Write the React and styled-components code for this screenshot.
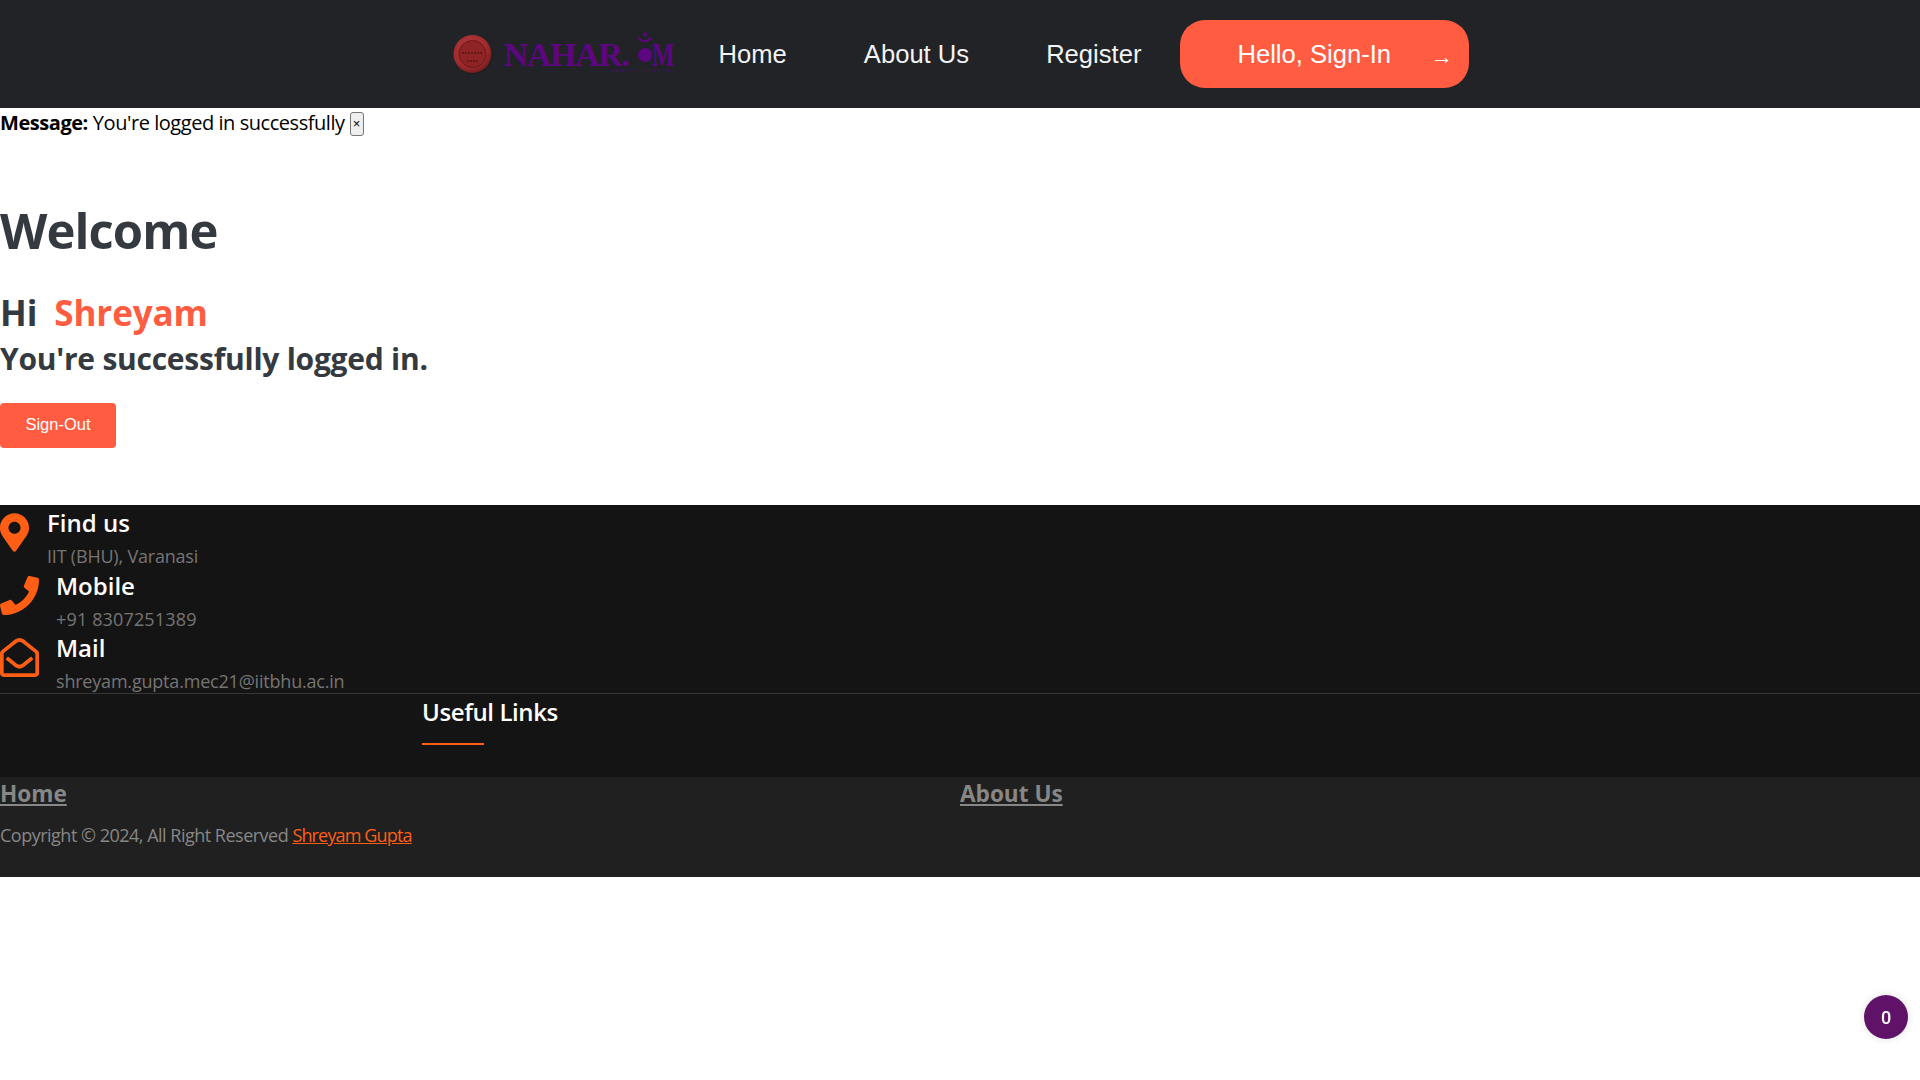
import React from 'react';
import styled, { createGlobalStyle } from 'styled-components';
import { FaMapMarkerAlt, FaPhone, FaRegEnvelopeOpen } from 'react-icons/fa';

const GlobalStyle = createGlobalStyle`
  * {
    box-sizing: border-box;
  }
  body {
    margin: 0;
    background: #fff;
    font-family: "Open Sans", "Noto Sans", sans-serif;
    color: #000;
  }
`;

const Navbar = styled.nav`
  height: 108px;
  background-color: #212326;
  display: flex;
  justify-content: center;
  align-items: center;
  font-family: "Liberation Sans", Arial, sans-serif;
`;

const Logo = styled.div`
  width: 223px;
  margin-right: 45px;
  padding-left: 2px;
  display: flex;
  align-items: center;
  justify-content: space-between;
`;

const SealIcon = styled.svg`
  flex: none;
`;

const Wordmark = styled.div`
  padding-top: 6px;
  display: flex;
  flex-direction: column;
  align-items: flex-end;
  color: #5c0680;
`;

const WordmarkRow = styled.div`
  display: flex;
  align-items: center;
  font-family: "Liberation Serif", serif;
  font-weight: 700;
  font-size: 34px;
  line-height: 26px;
  letter-spacing: -1.4px;
  white-space: nowrap;
`;

const OmMark = styled.span`
  position: relative;
  flex: none;
  width: 14px;
  height: 14px;
  margin-left: 9px;
  border-radius: 50%;
  background: #5c0680;
`;

const OmCrescent = styled.svg`
  position: absolute;
  left: -3px;
  top: -16px;
`;

const OmLetter = styled.span`
  display: inline-block;
  width: 22px;
  transform: scaleX(0.7);
  transform-origin: left center;
`;

const Tagline = styled.span`
  font-family: "Liberation Sans", sans-serif;
  font-size: 4px;
  line-height: 5px;
  letter-spacing: 2.6px;
  white-space: nowrap;
`;

const NavLink = styled.a`
  color: #f1f3f5;
  font-size: 25.6px;
  text-decoration: none;
  margin-right: ${(p) => p.$gap}px;
`;

const SignIn = styled.button`
  width: 289px;
  height: 68px;
  border: none;
  border-radius: 25px;
  background-color: #ff5c41;
  color: #fff;
  font-family: inherit;
  font-size: 25.6px;
  display: flex;
  align-items: center;
  padding: 0 0 0 57px;
`;

const Arrow = styled.span`
  font-size: 22px;
  margin-left: 40px;
  margin-top: 6px;
`;

const Alert = styled.div`
  height: 30px;
  margin-bottom: 63px;
  display: flex;
  align-items: center;
  font-size: 20px;
  line-height: 30px;
  letter-spacing: -0.45px;
`;

const AlertLabel = styled.strong`
  margin-right: 5px;
  font-weight: 700;
`;

const CloseButton = styled.button`
  width: 14px;
  height: 24px;
  margin: 2px 0 0 5px;
  padding: 0;
  border: 1px solid #767676;
  border-radius: 3px;
  background: #efefef;
  font-size: 13px;
  line-height: 20px;
  color: #000;
  font-family: "Liberation Sans", sans-serif;
`;

const Content = styled.main`
  color: #343a40;
  height: 304px;
`;

const Title = styled.h1`
  margin: 0 0 32px;
  font-size: 49px;
  line-height: 58px;
  letter-spacing: -0.9px;
  font-weight: 700;
`;

const Greeting = styled.h2`
  margin: 0 0 6px;
  font-size: 35px;
  line-height: 44px;
  letter-spacing: -0.1px;
  font-weight: 700;
  display: flex;
  gap: 17px;
`;

const Name = styled.span`
  color: #ff5c41;
`;

const Status = styled.h3`
  margin: 0 0 26px;
  font-size: 30px;
  line-height: 36px;
  letter-spacing: -0.25px;
  font-weight: 700;
`;

const SignOut = styled.button`
  width: 116px;
  height: 45px;
  border: none;
  border-radius: 4px;
  padding: 0 0 3px;
  background-color: #ff5c41;
  color: #fff;
  font-family: "Liberation Sans", sans-serif;
  font-size: 16.5px;
`;

const Footer = styled.footer`
  background-color: #151414;
`;

const Contacts = styled.div`
  height: 189px;
  border-bottom: 1px solid #373636;
  display: flex;
  flex-direction: column;
`;

const Contact = styled.div`
  height: 62.5px;
  display: flex;
`;

const IconSlot = styled.div`
  width: ${(p) => p.$width}px;
  flex: none;
  padding-top: 8px;
  color: #ff5e14;
  line-height: 0;

  svg {
    width: ${(p) => p.$iconWidth}px;
    height: 39px;
  }
`;

const ContactText = styled.div`
  display: flex;
  flex-direction: column;
`;

const ContactTitle = styled.h4`
  margin: 0 0 3px;
  color: #fff;
  font-size: 24px;
  line-height: 36px;
  font-weight: 600;
`;

const ContactValue = styled.span`
  color: #757575;
  font-size: 18px;
  line-height: 24px;
  letter-spacing: ${(p) => p.$spacing}px;
`;

const LinksHead = styled.div`
  height: 83px;
  padding-left: 422px;
`;

const LinksTitle = styled.h3`
  display: inline-block;
  position: relative;
  margin: 0;
  padding-top: 1px;
  color: #fff;
  font-size: 24px;
  line-height: 34px;
  letter-spacing: -0.4px;
  font-weight: 600;

  &::before {
    content: "";
    position: absolute;
    left: 0;
    bottom: -16px;
    width: 62px;
    height: 2px;
    background: #ff5e14;
  }
`;

const Bottom = styled.div`
  height: 100px;
  background-color: #202020;
`;

const BottomLinks = styled.div`
  display: grid;
  grid-template-columns: 1fr 1fr;
  height: 34px;
  margin-bottom: 11px;
`;

const BottomLink = styled.a`
  justify-self: start;
  color: #878787;
  font-size: 22.6px;
  line-height: 34px;
  font-weight: 700;
  text-decoration: underline;
`;

const Copyright = styled.p`
  margin: 0;
  color: #878787;
  font-size: 18px;
  line-height: 26px;
  letter-spacing: -0.5px;
`;

const Author = styled.a`
  color: #ff5e14;
  letter-spacing: -0.85px;
  text-decoration: underline;
`;

const CartBadge = styled.div`
  position: fixed;
  right: 12px;
  bottom: 41px;
  width: 44px;
  height: 44px;
  border-radius: 50%;
  background-color: #5f1268;
  box-shadow: 0 0 8px rgba(0, 0, 0, 0.12);
  color: #fff;
  font-family: Roboto, sans-serif;
  font-size: 18px;
  font-weight: 500;
  display: flex;
  align-items: center;
  justify-content: center;
`;

const Seal = () => (
  <SealIcon width="40" height="40" viewBox="0 0 40 40" aria-hidden="true">
    <defs>
      <radialGradient id="wax" cx="42%" cy="38%" r="65%">
        <stop offset="0%" stopColor="#b23a3c" />
        <stop offset="70%" stopColor="#a02c2e" />
        <stop offset="100%" stopColor="#6f1b1d" />
      </radialGradient>
    </defs>
    <circle cx="20.5" cy="21" r="19" fill="#111" opacity="0.35" />
    <circle cx="19.5" cy="20" r="19" fill="url(#wax)" />
    <circle cx="19.5" cy="20" r="13.5" fill="#8e2426" stroke="#6e1719" strokeWidth="1" />
    <path d="M9 19h21M14 27h11" stroke="#5d1214" strokeWidth="1.6" strokeDasharray="2 1" />
  </SealIcon>
);

const contacts = [
  { title: 'Find us', value: 'IIT (BHU), Varanasi', Icon: FaMapMarkerAlt, width: 47, iconWidth: 29, spacing: -0.2 },
  { title: 'Mobile', value: '+91 8307251389', Icon: FaPhone, width: 56, iconWidth: 39, spacing: 0.15 },
  { title: 'Mail', value: 'shreyam.gupta.mec21@iitbhu.ac.in', Icon: FaRegEnvelopeOpen, width: 56, iconWidth: 39, spacing: -0.2 },
];

const App = () => (
  <>
    <GlobalStyle />
    <Navbar>
      <Logo>
        <Seal />
        <Wordmark>
          <WordmarkRow>
            NAHAR.
            <OmMark>
              <OmCrescent width="20" height="14" viewBox="0 0 20 14" aria-hidden="true">
                <path d="M4 5c1 5 9 6 12 0" fill="none" stroke="#5c0680" strokeWidth="2" />
                <circle cx="10" cy="2.5" r="2" fill="#5c0680" />
              </OmCrescent>
            </OmMark>
            <OmLetter>M</OmLetter>
          </WordmarkRow>
          <Tagline>FAMILY OFFICE</Tagline>
        </Wordmark>
      </Logo>
      <NavLink href="#" $gap={77}>Home</NavLink>
      <NavLink href="#" $gap={77}>About Us</NavLink>
      <NavLink href="#" $gap={39}>Register</NavLink>
      <SignIn>
        Hello, Sign-In
        <Arrow>→</Arrow>
      </SignIn>
    </Navbar>
    <Alert>
      <AlertLabel>Message:</AlertLabel> You're logged in successfully
      <CloseButton>×</CloseButton>
    </Alert>
    <Content>
      <Title>Welcome</Title>
      <Greeting>
        Hi <Name>Shreyam</Name>
      </Greeting>
      <Status>You're successfully logged in.</Status>
      <SignOut>Sign-Out</SignOut>
    </Content>
    <Footer>
      <Contacts>
        {contacts.map(({ title, value, Icon, width, iconWidth, spacing }) => (
          <Contact key={title}>
            <IconSlot $width={width} $iconWidth={iconWidth}>
              <Icon />
            </IconSlot>
            <ContactText>
              <ContactTitle>{title}</ContactTitle>
              <ContactValue $spacing={spacing}>{value}</ContactValue>
            </ContactText>
          </Contact>
        ))}
      </Contacts>
      <LinksHead>
        <LinksTitle>Useful Links</LinksTitle>
      </LinksHead>
      <Bottom>
        <BottomLinks>
          <BottomLink href="#">Home</BottomLink>
          <BottomLink href="#">About Us</BottomLink>
        </BottomLinks>
        <Copyright>
          Copyright © 2024, All Right Reserved <Author href="#">Shreyam Gupta</Author>
        </Copyright>
      </Bottom>
    </Footer>
    <CartBadge>0</CartBadge>
  </>
);

export default App;
